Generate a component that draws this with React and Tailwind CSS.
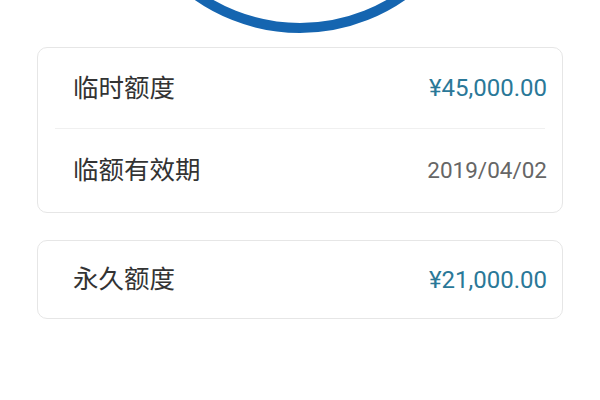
export default function App() {
  const font = { fontFamily: "Roboto, 'Noto Sans CJK SC', sans-serif" };
  return (
    <div className="w-[600px] h-[400px] bg-white overflow-hidden" style={font}>
      <svg width="600" height="47" className="block">
        <circle cx="300" cy="-151" r="179" fill="none" stroke="#1565b0" strokeWidth="10" />
      </svg>
      <div className="mx-[37px] rounded-[10px] border border-[#e6e6e6] flex flex-col">
        <div className="h-[80px] flex items-center justify-between pl-[35px] pr-[15px]">
          <span className="text-[25.5px] text-[#333333]">临时额度</span>
          <span className="text-[24px] text-[#2a7898]">¥45,000.00</span>
        </div>
        <div className="mx-[17px] h-px bg-[#f0f0f0]"></div>
        <div className="h-[83px] flex items-center justify-between pl-[35px] pr-[15px]">
          <span className="text-[25.5px] text-[#333333]">临额有效期</span>
          <span className="text-[22.5px] text-[#666666]">2019/04/02</span>
        </div>
      </div>
      <div className="mx-[37px] mt-[27px] h-[79px] rounded-[10px] border border-[#e6e6e6] flex items-center justify-between pl-[35px] pr-[15px]">
        <span className="text-[25.5px] text-[#333333]">永久额度</span>
        <span className="text-[24px] text-[#2a7898]">¥21,000.00</span>
      </div>
    </div>
  );
}
